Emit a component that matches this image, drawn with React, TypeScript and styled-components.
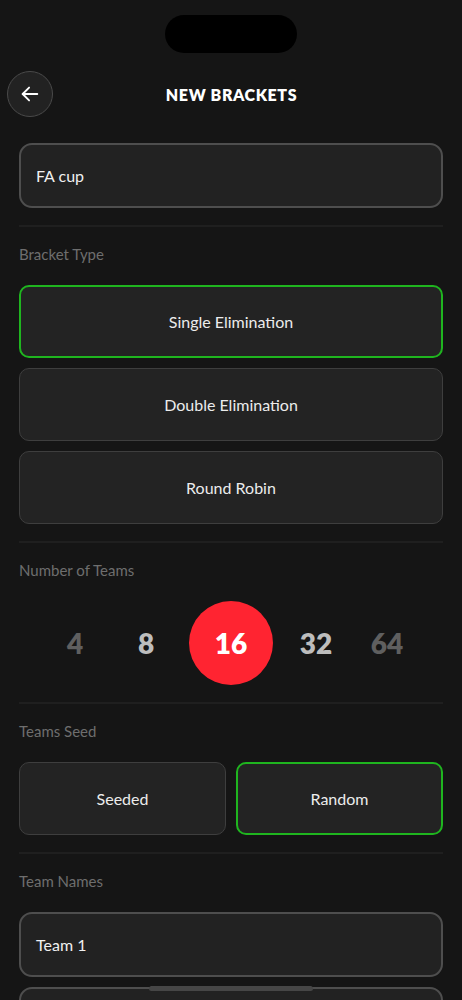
import React from "react";
import styled, { createGlobalStyle, css } from "styled-components";

const Global = createGlobalStyle`
  html, body { margin: 0; padding: 0; background: #151515; }
  body { font-family: "Lato", "Open Sans", sans-serif; color: #e8e8e8; }
  * { box-sizing: border-box; }
`;

const Page = styled.div`
  width: 462px;
  min-height: 1000px;
  background: #151515;
  padding-bottom: 40px;
`;

const StatusBar = styled.div`
  display: flex;
  justify-content: center;
  padding-top: 15px;
  height: 71px;
`;

const Island = styled.div`
  width: 132px;
  height: 38px;
  border-radius: 19px;
  background: #000;
`;

const Header = styled.header`
  display: grid;
  grid-template-columns: 46px 1fr 46px;
  align-items: center;
  padding: 0 6px 0 7px;
  height: 46px;
`;

const BackButton = styled.button`
  width: 46px;
  height: 46px;
  border-radius: 50%;
  border: 1.5px solid #4a4a4a;
  background: #222;
  display: flex;
  align-items: center;
  justify-content: center;
  padding: 0;
  color: #fff;
`;

const Title = styled.h1`
  margin: 0;
  text-align: center;
  font-size: 16px;
  font-weight: 800;
  letter-spacing: 0.6px;
  color: #fff;
`;

const Content = styled.main`
  padding: 26px 19px 0;
  display: flex;
  flex-direction: column;
`;

const TextField = styled.div`
  height: 65px;
  border: 2px solid #4e4e4e;
  border-radius: 13px;
  background: #222;
  display: flex;
  align-items: center;
  padding: 0 15px;
  font-size: 16px;
  color: #f0f0f0;
`;

const Divider = styled.div`
  height: 2px;
  background: #1f1f1f;
  margin-top: 17px;
`;

const Label = styled.div`
  margin-top: 17px;
  height: 20px;
  line-height: 20px;
  font-size: 15px;
  color: #6e6e6e;
`;

const OptionList = styled.div<{ $columns?: number }>`
  margin-top: 21px;
  display: grid;
  grid-template-columns: repeat(${(p) => p.$columns ?? 1}, 1fr);
  gap: 10px;
`;

const Option = styled.div<{ $active?: boolean }>`
  height: 73px;
  border-radius: 10px;
  background: #232323;
  border: 1.5px solid #3e3e3e;
  display: flex;
  align-items: center;
  justify-content: center;
  font-size: 16px;
  color: #ececec;
  ${(p) =>
    p.$active &&
    css`
      border: 2px solid #1fb51f;
    `}
`;

const NumberRow = styled.div`
  margin-top: 21px;
  display: flex;
  justify-content: center;
  align-items: center;
  gap: 15px;
`;

const NumberItem = styled.div<{ $level: "dim" | "mid" | "active" }>`
  width: 56px;
  height: 84px;
  display: flex;
  align-items: center;
  justify-content: center;
  font-weight: 800;
  font-size: 28px;
  color: ${(p) => (p.$level === "dim" ? "#5f5f5f" : "#bdbdbd")};
  ${(p) =>
    p.$level === "active" &&
    css`
      width: 84px;
      border-radius: 50%;
      background: #ff2431;
      color: #fff;
    `}
`;

const TeamList = styled.div`
  margin-top: 21px;
  display: flex;
  flex-direction: column;
  gap: 10px;
`;

const HomeIndicator = styled.div`
  position: fixed;
  left: 149px;
  top: 986px;
  width: 164px;
  height: 5px;
  border-radius: 3px;
  background: #464646;
`;

const teams = [4, 8, 16, 32, 64];

export default function App() {
  return (
    <>
      <Global />
      <Page>
        <StatusBar>
          <Island />
        </StatusBar>
        <Header>
          <BackButton aria-label="Back">
            <svg width="22" height="22" viewBox="0 0 24 24" fill="none" stroke="#fff" strokeWidth="2" strokeLinecap="round" strokeLinejoin="round">
              <path d="M20 12H4" />
              <path d="M11 5l-7 7 7 7" />
            </svg>
          </BackButton>
          <Title>NEW BRACKETS</Title>
          <span />
        </Header>
        <Content>
          <TextField>FA cup</TextField>
          <Divider />
          <Label>Bracket Type</Label>
          <OptionList>
            <Option $active>Single Elimination</Option>
            <Option>Double Elimination</Option>
            <Option>Round Robin</Option>
          </OptionList>
          <Divider />
          <Label>Number of Teams</Label>
          <NumberRow>
            {teams.map((n) => (
              <NumberItem
                key={n}
                $level={n === 16 ? "active" : n === 8 || n === 32 ? "mid" : "dim"}
              >
                {n}
              </NumberItem>
            ))}
          </NumberRow>
          <Divider />
          <Label>Teams Seed</Label>
          <OptionList $columns={2}>
            <Option>Seeded</Option>
            <Option $active>Random</Option>
          </OptionList>
          <Divider />
          <Label>Team Names</Label>
          <TeamList>
            <TextField>Team 1</TextField>
            <TextField />
          </TeamList>
        </Content>
        <HomeIndicator />
      </Page>
    </>
  );
}
